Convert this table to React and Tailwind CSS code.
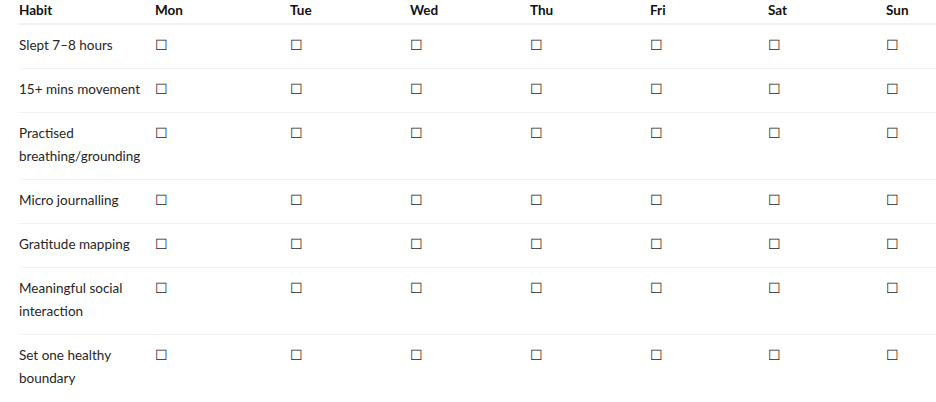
import React from 'react';

const DAYS = ['Mon', 'Tue', 'Wed', 'Thu', 'Fri', 'Sat', 'Sun'];
const HABITS = [
  'Slept 7–8 hours',
  '15+ mins movement',
  'Practised breathing/grounding',
  'Micro journalling',
  'Gratitude mapping',
  'Meaningful social interaction',
  'Set one healthy boundary',
];

// column widths measured from the reference
const WIDTHS = ['w-[136px]', 'w-[135px]', 'w-[120px]', 'w-[120px]', 'w-[120px]', 'w-[118px]', 'w-[118px]', 'w-[60px]'];

export default function App() {
  return (
    <div className="bg-white w-[936px] h-[402px] overflow-hidden pl-[19px] text-[13.5px] leading-[23px] text-[#262626] font-['Lato',sans-serif]">
      <table className="table-fixed border-collapse w-[917px] -mt-[1px]">
        <colgroup>
          {WIDTHS.map((w, i) => (
            <col key={i} className={w} />
          ))}
        </colgroup>
        <thead>
          <tr className="border-b-2 border-[#f0f0f0]">
            <th className="text-left font-bold text-[#111] pt-0 pb-[1px] pr-2 align-top">Habit</th>
            {DAYS.map(d => (
              <th key={d} className="text-left font-bold text-[#111] pt-0 pb-[1px] pr-2 align-top">{d}</th>
            ))}
          </tr>
        </thead>
        <tbody>
          {HABITS.map(h => (
            <tr key={h} className="border-b border-[#f3f3f3] last:border-b-0">
              <td className="pt-[9px] pb-[11px] pr-2 align-top">{h}</td>
              {DAYS.map(d => (
                <td key={d} className="pt-[9px] pb-[11px] pr-2 align-top">☐</td>
              ))}
            </tr>
          ))}
        </tbody>
      </table>
    </div>
  );
}
